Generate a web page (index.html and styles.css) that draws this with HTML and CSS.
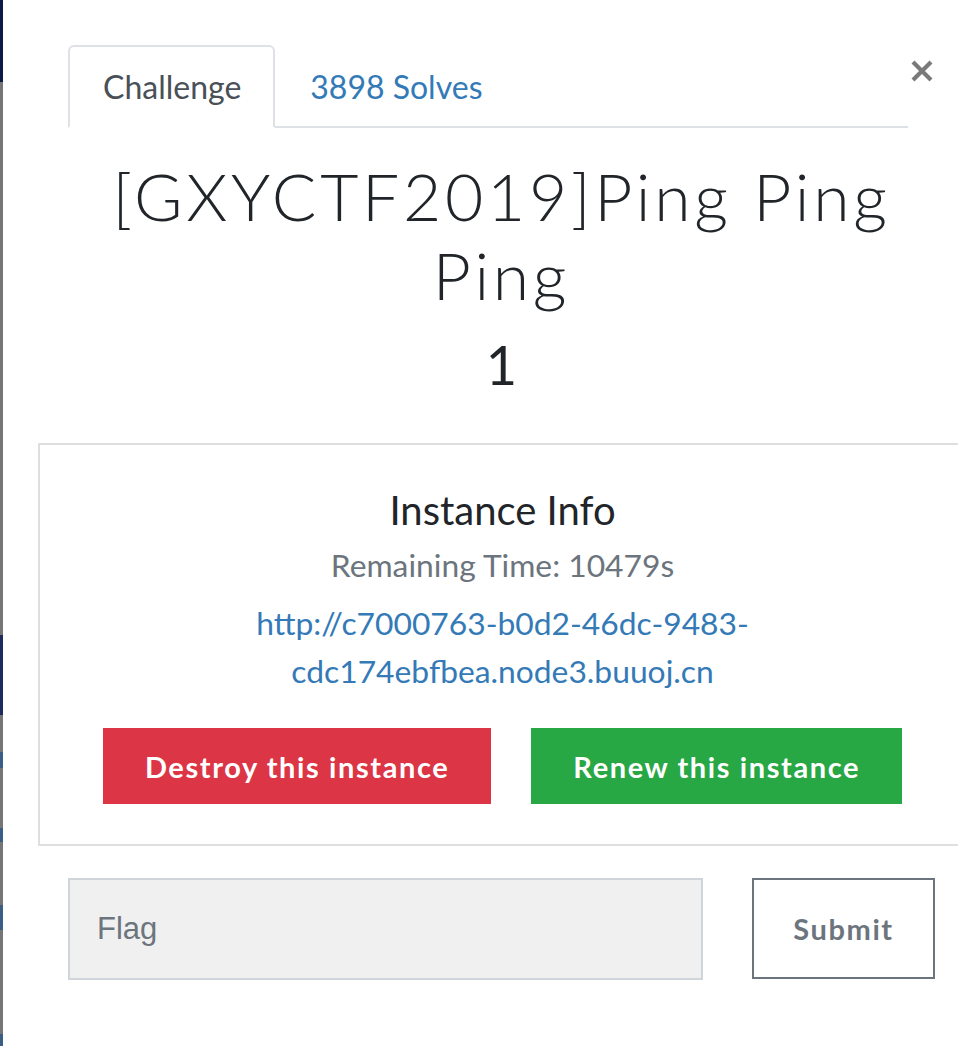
FILE: index.html
```html
<!DOCTYPE html>
<html lang="en">
<head>
<meta charset="utf-8">
<title>[GXYCTF2019]Ping Ping Ping</title>
<link rel="stylesheet" href="styles.css">
</head>
<body>
<div class="page">
  <div class="backdrop"></div>
  <div class="modal">
    <div class="modal-head">
      <ul class="tabs">
        <li class="tab tab-active">Challenge</li>
        <li class="tab tab-link">3898 Solves</li>
      </ul>
      <button class="close" aria-label="Close">
        <svg width="22" height="22" viewBox="0 0 22 22"><path d="M2 2 L20 20 M20 2 L2 20" stroke="#7a7a7a" stroke-width="4.2" stroke-linecap="butt" fill="none"/></svg>
      </button>
    </div>
    <h2 class="chal-name">[GXYCTF2019]Ping Ping Ping</h2>
    <h4 class="chal-value">1</h4>
    <div class="card">
      <h5 class="card-title">Instance Info</h5>
      <p class="remaining">Remaining Time: 10479s</p>
      <p class="link-wrap"><a class="inst-link" href="#">http://c7000763-b0d2-46dc-9483-cdc174ebfbea.node3.buuoj.cn</a></p>
      <div class="actions">
        <button class="btn btn-danger">Destroy this instance</button>
        <button class="btn btn-success">Renew this instance</button>
      </div>
    </div>
    <div class="flag-row">
      <input class="flag-input" type="text" placeholder="Flag">
      <button class="btn btn-submit">Submit</button>
    </div>
  </div>
</div>
</body>
</html>
```
FILE: styles.css
```css
html, body {
  margin: 0;
  padding: 0;
  background: #fff;
  overflow: hidden;
}
.page {
  display: flex;
  width: 958px;
  height: 1046px;
  overflow: hidden;
  font-family: "Lato", "Liberation Sans", sans-serif;
  color: #212529;
}
.backdrop {
  flex: 0 0 3px;
  height: 1046px;
  background: linear-gradient(to bottom,
    #0c1a45 0 82px,
    #767676 82px 635px,
    #1c2a5e 635px 715px,
    #767676 715px 752px,
    #3c5d85 752px 768px,
    #767676 768px 828px,
    #3c5d85 828px 842px,
    #767676 842px 905px,
    #3c5d85 905px 930px,
    #767676 930px 1034px,
    #3c5d85 1034px 1046px);
}
.modal {
  flex: 1;
  padding: 45px 0 0 65px;
  background: #fff;
}
.modal-head {
  display: flex;
  align-items: flex-start;
  width: 867px;
}
.tabs {
  display: flex;
  flex: 0 0 840px;
  margin: 0;
  padding: 0;
  list-style: none;
  border-bottom: 2px solid #dee2e6;
}
.tab {
  padding: 15px 32px 15px 33px;
  font-size: 32px;
  line-height: 49px;
  border: 2px solid transparent;
  border-radius: 6px 6px 0 0;
  margin-bottom: -2px;
}
.tab-active {
  color: #495057;
  border-color: #dee2e6 #dee2e6 #fff;
  background: #fff;
}
.tab-link {
  color: #337ab7;
}
.close {
  margin: 15px 0 0 3px;
  padding: 0;
  border: 0;
  background: none;
  width: 22px;
  height: 22px;
  line-height: 0;
}
.chal-name {
  width: 867px;
  margin: 28px 0 0;
  text-align: center;
  font-weight: 300;
  font-size: 66px;
  line-height: 79px;
  letter-spacing: 3.7px;
}
.chal-value {
  width: 867px;
  margin: 21px 0 0;
  text-align: center;
  font-weight: 400;
  font-size: 54px;
  line-height: 60px;
}
.card {
  margin: 48px 0 0 -30px;
  width: 925px;
  border: 2px solid #dfdfdf;
  padding: 41px 0 40px;
  text-align: center;
}
.card-title {
  margin: 0;
  font-size: 40px;
  font-weight: 400;
  line-height: 49px;
}
.remaining {
  margin: 6px 0 0;
  font-size: 31.8px;
  line-height: 49px;
  color: #6c757d;
}
.link-wrap {
  margin: 9px auto 0;
  max-width: 580px;
  font-size: 31.8px;
  line-height: 48px;
}
.inst-link {
  color: #337ab7;
  text-decoration: none;
}
.actions {
  display: flex;
  justify-content: center;
  gap: 40px;
  margin-top: 33px;
}
.btn {
  font-family: "Lato", "Liberation Sans", sans-serif;
  font-weight: 700;
  font-size: 29px;
  letter-spacing: 1.6px;
  border: 0;
  border-radius: 0;
  height: 76px;
  padding: 0 42px;
  color: #fff;
}
.btn-danger {
  background: #dc3545;
}
.btn-success {
  background: #28a745;
}
.flag-row {
  display: flex;
  justify-content: space-between;
  width: 867px;
  margin-top: 32px;
}
.flag-input {
  width: 635px;
  height: 102px;
  box-sizing: border-box;
  border: 2px solid #d0d5db;
  background: #f0f0f0;
  padding: 0 27px;
  font-family: "Liberation Sans", Arial, sans-serif;
  font-size: 31px;
  color: #495057;
  border-radius: 0;
  outline: none;
}
.flag-input::placeholder {
  color: #6c757d;
}
.btn-submit {
  width: 183px;
  height: 101px;
  box-sizing: border-box;
  padding: 0;
  background: #fff;
  border: 2px solid #6c757d;
  color: #6c757d;
}
```
